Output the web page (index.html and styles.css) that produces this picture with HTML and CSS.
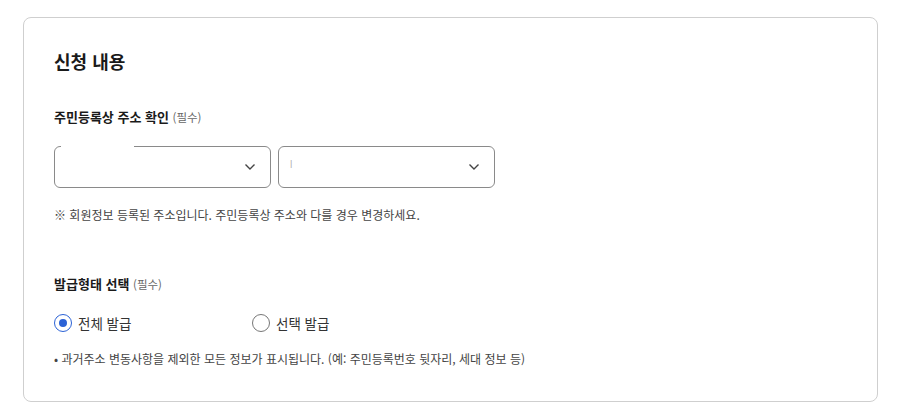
FILE: index.html
```html
<!DOCTYPE html>
<html lang="ko">
<head>
  <meta charset="UTF-8" />
  <meta name="viewport" content="width=device-width, initial-scale=1.0"/>
  <title>신청 내용</title>
  <link rel="stylesheet" href="styles.css">
</head>
<body>
  <section class="card">
    <h2 class="card-title">신청 내용</h2>

    <div class="field-label">주민등록상 주소 확인 <span class="req">(필수)</span></div>
    <div class="select-row">
      <div class="select select-first">
        <span class="select-value"></span>
        <svg class="chevron" width="12" height="8" viewBox="0 0 12 8"><path d="M1.5 1.5 L6 6 L10.5 1.5" fill="none" stroke="#444" stroke-width="1.4"/></svg>
      </div>
      <div class="select">
        <span class="select-value faint">ㅣ</span>
        <svg class="chevron" width="12" height="8" viewBox="0 0 12 8"><path d="M1.5 1.5 L6 6 L10.5 1.5" fill="none" stroke="#444" stroke-width="1.4"/></svg>
      </div>
    </div>
    <p class="note">※ 회원정보 등록된 주소입니다. 주민등록상 주소와 다를 경우 변경하세요.</p>

    <div class="field-label label-gap">발급형태 선택 <span class="req">(필수)</span></div>
    <div class="radio-row">
      <label class="radio checked"><span class="dot"></span>전체 발급</label>
      <label class="radio"><span class="dot"></span>선택 발급</label>
    </div>
    <p class="note bullet">• 과거주소 변동사항을 제외한 모든 정보가 표시됩니다. (예: 주민등록번호 뒷자리, 세대 정보 등)</p>
  </section>
</body>
</html>
```

FILE: styles.css
```css
body {
  margin: 0;
  background: #fff;
  color: #222;
  font-family: "Noto Sans CJK KR", "Noto Sans", sans-serif;
}

.card {
  margin: 17px 0 0 23px;
  width: 793px;
  height: 353px;
  padding: 30px 30px 0 30px;
  border: 1px solid #cfcfcf;
  border-radius: 8px;
}

.card-title {
  margin: 0;
  font-size: 18px;
  line-height: 26px;
  font-weight: 700;
  color: #1a1a1a;
}

.field-label {
  margin-top: 33px;
  font-size: 13px;
  line-height: 20px;
  font-weight: 700;
  color: #1a1a1a;
}

.field-label .req {
  font-size: 11.5px;
  font-weight: 400;
  color: #666;
}

.label-gap {
  margin-top: 50px;
}

.select-row {
  display: flex;
  gap: 7px;
  margin-top: 19px;
}

.select {
  position: relative;
  box-sizing: border-box;
  width: 217px;
  height: 42px;
  border: 1px solid #8a8a8a;
  border-radius: 6px;
  display: flex;
  align-items: center;
  justify-content: space-between;
  padding: 0 14px 0 8px;
}

.select-first::before {
  content: '';
  position: absolute;
  top: -1px;
  left: 6px;
  width: 73px;
  height: 2px;
  background: #fff;
}

.select-value {
  font-size: 11px;
  color: #333;
}

.select-value.faint {
  color: #aaa;
  font-size: 9px;
  margin-bottom: 8px;
}

.note {
  margin: 18px 0 0;
  font-size: 12px;
  line-height: 18px;
  color: #444;
}

.note.bullet {
  margin-top: 15px;
  font-size: 12px;
}

.radio-row {
  display: flex;
  margin-top: 17px;
  height: 24px;
  align-items: center;
}

.radio {
  width: 198px;
  display: flex;
  align-items: center;
  gap: 6px;
  font-size: 13.5px;
  color: #333;
}

.radio .dot {
  width: 18px;
  height: 18px;
  border: 1.5px solid #777;
  border-radius: 50%;
  box-sizing: border-box;
  display: flex;
  align-items: center;
  justify-content: center;
}

.radio.checked .dot {
  border-color: #2b62d6;
}

.radio.checked .dot::after {
  content: '';
  width: 8px;
  height: 8px;
  border-radius: 50%;
  background: #2b62d6;
}
```
